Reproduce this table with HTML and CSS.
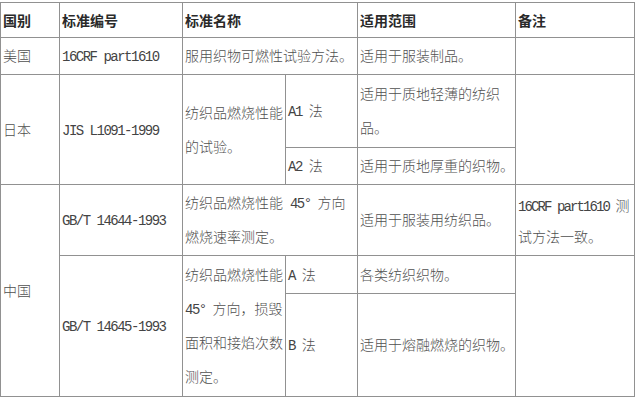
FILE: index.html
```html
<!DOCTYPE html>
<html lang="zh-CN">
<head>
<meta charset="utf-8">
<title>纺织品燃烧性能标准对比</title>
<link rel="stylesheet" href="styles.css">
</head>
<body>
<table class="std">
  <colgroup>
    <col class="c-country">
    <col class="c-code">
    <col class="c-name">
    <col class="c-method">
    <col class="c-scope">
    <col class="c-note">
  </colgroup>
  <tr class="r-head">
    <th>国别</th>
    <th>标准编号</th>
    <th colspan="2">标准名称</th>
    <th>适用范围</th>
    <th>备注</th>
  </tr>
  <tr class="r-us">
    <td>美国</td>
    <td><span class="lat">16CRF part1610</span></td>
    <td colspan="2">服用织物可燃性试验方法。</td>
    <td>适用于服装制品。</td>
    <td></td>
  </tr>
  <tr class="r-jp1">
    <td rowspan="2">日本</td>
    <td rowspan="2"><span class="lat">JIS L1091-1999</span></td>
    <td rowspan="2">纺织品燃烧性能<br>的试验。</td>
    <td><span class="lat">A1 </span>法</td>
    <td>适用于质地轻薄的纺织<br>品。</td>
    <td rowspan="2"></td>
  </tr>
  <tr class="r-jp2">
    <td><span class="lat">A2 </span>法</td>
    <td>适用于质地厚重的织物。</td>
  </tr>
  <tr class="r-cn1">
    <td rowspan="3">中国</td>
    <td><span class="lat">GB/T 14644-1993</span></td>
    <td colspan="2">纺织品燃烧性能<span class="lat"> 45° </span>方向<br>燃烧速率测定。</td>
    <td>适用于服装用纺织品。</td>
    <td class="note"><span class="lat">16CRF part1610 </span>测<br>试方法一致。</td>
  </tr>
  <tr class="r-cn2a">
    <td rowspan="2"><span class="lat">GB/T 14645-1993</span></td>
    <td rowspan="2">纺织品燃烧性能<br><span class="lat">45° </span>方向，损毁<br>面积和接焰次数<br>测定。</td>
    <td><span class="lat">A </span>法</td>
    <td>各类纺织织物。</td>
    <td rowspan="2"></td>
  </tr>
  <tr class="r-cn2b">
    <td><span class="lat">B </span>法</td>
    <td>适用于熔融燃烧的织物。</td>
  </tr>
</table>
</body>
</html>
```

FILE: styles.css
```css
html, body {
  margin: 0;
  padding: 0;
  background: #ffffff;
}

body {
  padding-top: 2px;
}

.std {
  border-collapse: collapse;
  table-layout: fixed;
  width: 635px;
  font-family: "Liberation Mono", "Noto Sans CJK SC", monospace;
  font-size: 14px;
  color: #505050;
}

.c-country { width: 59px; }
.c-code { width: 123px; }
.c-name { width: 103px; }
.c-method { width: 72px; }
.c-scope { width: 158px; }
.c-note { width: 119px; }

.std th,
.std td {
  border: 1px solid #919191;
  padding: 0 0 0 2px;
  vertical-align: middle;
  text-align: left;
  line-height: 34px;
  white-space: nowrap;
}

.std td {
  font-weight: 300;
  padding-top: 2px;
}

.std th {
  font-family: "Noto Sans CJK SC", sans-serif;
  font-weight: 700;
  color: #2a2a2a;
}

.std .note {
  line-height: 31px;
  padding-top: 5px;
  padding-left: 2px;
}

.note .lat {
  letter-spacing: -1.9px;
}

.lat {
  font-family: "Liberation Mono", monospace;
  font-weight: 400;
  letter-spacing: -1.5px;
  color: #444444;
}

.r-head { height: 35px; }
.r-us { height: 35px; }
.r-jp1 { height: 73px; }
.r-jp2 { height: 35px; }
.r-cn1 { height: 71px; }
.r-cn2a { height: 38px; }
.r-cn2b { height: 103px; }
```
